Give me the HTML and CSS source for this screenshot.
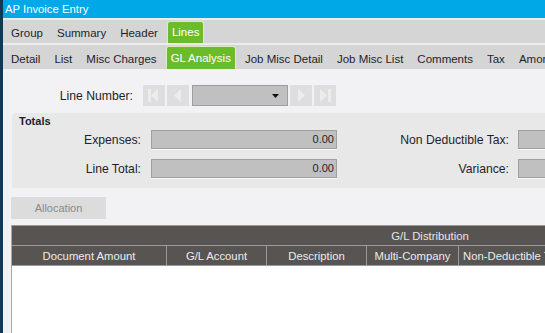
FILE: index.html
```html
<html><head>
<meta name="viewport" content="width=device-width, initial-scale=1">
<link rel="stylesheet" href="styles.css"></head><body>

<div class="app">
  <div class="edge"></div>
  <div class="main">
    <div class="titlebar">AP Invoice Entry</div>

    <div class="tabrow top">
      <span class="tab">Group</span>
      <span class="tab">Summary</span>
      <span class="tab">Header</span>
      <span class="tab active">Lines</span>
    </div>

    <div class="tabrow sub">
      <span class="tab">Detail</span>
      <span class="tab">List</span>
      <span class="tab">Misc Charges</span>
      <span class="tab active">GL Analysis</span>
      <span class="tab">Job Misc Detail</span>
      <span class="tab">Job Misc List</span>
      <span class="tab">Comments</span>
      <span class="tab">Tax</span>
      <span class="tab">Amortization</span>
    </div>

    <div class="content">
      <div class="linenav">
        <span class="navlabel">Line Number:</span>
        <span class="navbtn"><svg width="22" height="21" viewBox="0 0 22 21"><rect x="5" y="4" width="3" height="13" fill="#ececec"/><polygon points="8,10.5 15,4 15,17" fill="#ececec"/></svg></span>
        <span class="navbtn"><svg width="22" height="21" viewBox="0 0 22 21"><polygon points="7,10.5 14,4 14,17" fill="#ececec"/></svg></span>
        <span class="combo"><svg width="8" height="5" viewBox="0 0 8 5"><polygon points="0,0 7,0 3.5,4" fill="#111"/></svg></span>
        <span class="navbtn"><svg width="22" height="21" viewBox="0 0 22 21"><polygon points="8,4 15,10.5 8,17" fill="#ececec"/></svg></span>
        <span class="navbtn"><svg width="22" height="21" viewBox="0 0 22 21"><polygon points="6,4 13,10.5 6,17" fill="#ececec"/><rect x="14" y="4" width="3" height="13" fill="#ececec"/></svg></span>
      </div>

      <div class="totals">
        <div class="totals-title">Totals</div>
        <div class="totals-row">
          <span class="lbl">Expenses:</span>
          <span class="field">0.00</span>
          <span class="lbl wide">Non Deductible Tax:</span>
          <span class="field"></span>
        </div>
        <div class="totals-row">
          <span class="lbl">Line Total:</span>
          <span class="field">0.00</span>
          <span class="lbl wide">Variance:</span>
          <span class="field"></span>
        </div>
      </div>

      <div class="btnbar"><span class="btn-disabled">Allocation</span></div>

      <div class="grid">
        <div class="grid-group">G/L Distribution</div>
        <div class="grid-head">
          <span class="col c1">Document Amount</span>
          <span class="col c2">G/L Account</span>
          <span class="col c3">Description</span>
          <span class="col c4">Multi-Company</span>
          <span class="col c5">Non-Deductible Tax</span>
        </div>
        <div class="grid-body"></div>
      </div>
    </div>
  </div>
</div>

</body></html>
```

FILE: styles.css
```css
body {margin: 0; font-family: "Liberation Sans", Arial, sans-serif; font-size: 12.2px; color: #1f1f2a; overflow: hidden;}

.app {display: flex; width: 545px; height: 333px; overflow: hidden;}
.edge {width: 3px; flex: none; background-color: #0d3a5a;}
.main {flex: 1; display: flex; flex-direction: column; min-width: 0; overflow: hidden; background-color: #f2f2f4;}

.titlebar {
  height: 18px;
  line-height: 19px;
  padding-left: 2px;
  background-color: #00a8e8;
  color: #fff;
  font-size: 11.3px;
  border-bottom: 2px solid #ececec;
  flex: none;
}

.tabrow {
  display: flex;
  align-items: stretch;
  background-color: #d5d5d5;
  padding-left: 1px;
  white-space: nowrap;
  font-size: 11.5px;
  flex: none;
}
.tabrow.top {height: 23px; border-bottom: 2px solid #ececec;}
.tabrow.sub {height: 24px;}

.tab {display: flex; align-items: center; padding: 3px 7px 0 7px;}
.tab.active {
  margin: 1px 2px 0 2px;
  padding: 0 4px 1px 4px;
  background-color: #6cbb2b;
  color: #fff;
  border: 1px solid #d6eec0;
  border-bottom: none;
  border-radius: 3px 3px 0 0;
}

.content {padding: 16px 0 0 8px; flex: 1; display: flex; flex-direction: column;}

.linenav {display: flex; align-items: center; height: 21px;}
.navlabel {width: 122px; text-align: right; margin-right: 10px;}
.navbtn {width: 22px; height: 21px; background-color: #dedede; margin-right: 2px; display: block;}
.navbtn svg {display: block;}
.combo {
  width: 94px;
  height: 19px;
  margin: 0 2px 0 1px;
  background-color: #c0c0c0;
  border: 1px solid #9d9d9d;
  display: flex;
  align-items: center;
  justify-content: flex-end;
}
.combo svg {margin-right: 7px; margin-top: 1px;}

.totals {
  margin: 7px 0 0 1px;
  background-color: #e8e8e8;
  border-radius: 4px 0 0 0;
  padding-bottom: 10px;
}
.totals-title {font-weight: bold; font-size: 11px; padding: 2px 0 0 7px; height: 15px;}
.totals-row {display: flex; align-items: center; height: 19px; margin-bottom: 10px;}
.totals-row:last-child {margin-bottom: 0;}
.lbl {width: 129px; text-align: right; margin-right: 10px; flex: none;}
.lbl.wide {width: 172px; margin-right: 9px;}
.field {
  width: 182px;
  height: 17px;
  flex: none;
  background-color: #c0c0c0;
  border: 1px solid #9f9f9f;
  box-shadow: 0 1px 0 #fafafa;
  font-size: 11px;
  text-align: right;
  line-height: 17px;
  padding-right: 2px;
}

.btnbar {margin-top: 9px;}
.btn-disabled {
  display: inline-block;
  width: 95px;
  height: 22px;
  line-height: 22px;
  text-align: center;
  background-color: #dcdcdc;
  color: #8a8a8a;
  font-size: 11px;
}

.grid {margin-top: 6px; width: 836px; flex: 1; display: flex; flex-direction: column; border-left: 1px solid #a9a9a9; font-size: 11.3px;}
.grid-group {
  height: 19px;
  line-height: 20px;
  text-align: center;
  background-color: #575451;
  color: #e6e6e6;
  border-top: 1px solid #9a9a9a;
  border-bottom: 1px solid #9a9a9a;
}
.grid-head {display: flex; height: 19px; background-color: #575451; border-bottom: 1px solid #9a9a9a;}
.col {color: #ececec; text-align: center; line-height: 20px; border-right: 1px solid #9a9a9a; flex: none;}
.c1 {width: 154px;}
.c2 {width: 99px;}
.c3 {width: 99px;}
.c4 {width: 91px;}
.c5 {width: 120px; text-align: left; padding-left: 4px;}
.grid-body {flex: 1; background-color: #fff;}
```
